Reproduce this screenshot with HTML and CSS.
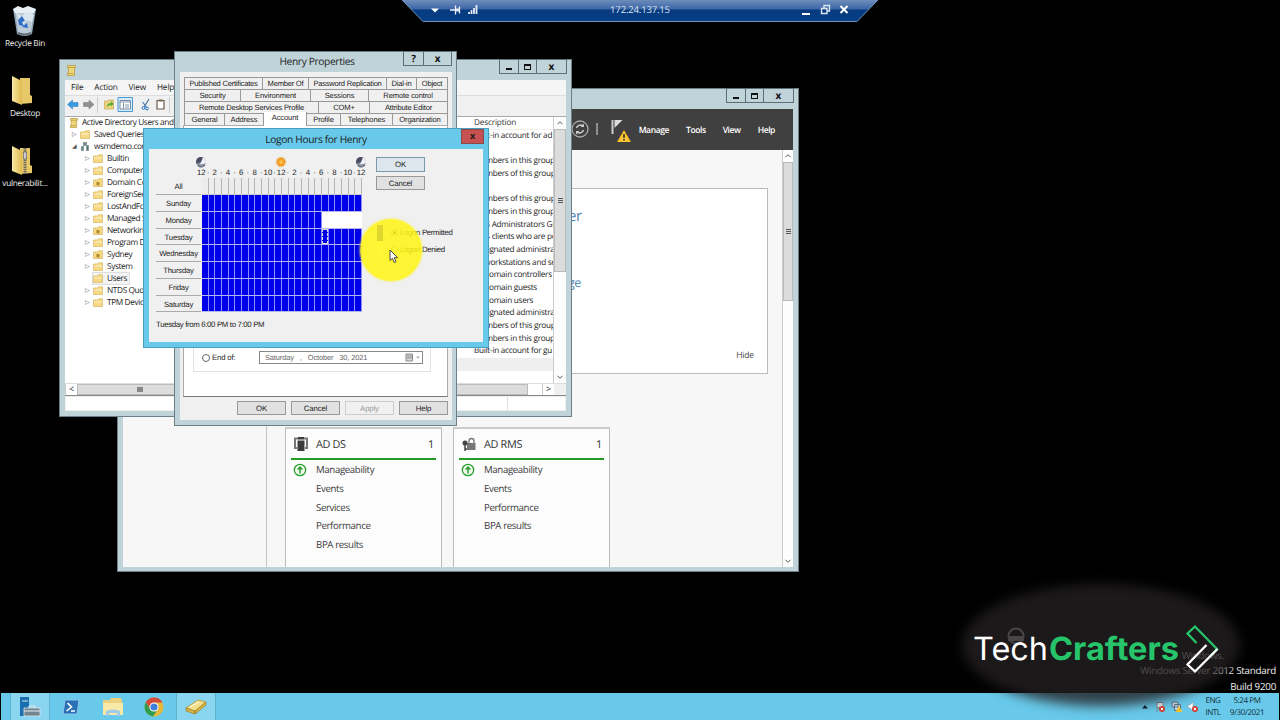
FILE: index.html
```html
<!DOCTYPE html>
<html lang="en">
<head>
<meta charset="UTF-8">
<meta name="viewport" content="width=device-width, initial-scale=1.0">
<title>172.24.137.15</title>
<link rel="stylesheet" href="styles.css">
</head>
<body>
<svg width="0" height="0" class="defs">
  <defs>
    <linearGradient id="gold" x1="0" x2="1"><stop offset="0" stop-color="#f8e9a4"/><stop offset="1" stop-color="#dfb94e"/></linearGradient>
    <radialGradient id="sun"><stop offset="0" stop-color="#ffcf5a"/><stop offset="1" stop-color="#ee8a10"/></radialGradient>
    <symbol id="folder" viewBox="0 0 10 9"><path d="M.5 2h4l1-1.2h4v7.7h-9z" fill="#f5d988" stroke="#d9b65c" stroke-width=".7"/><path d="M1 4h8" stroke="#fdf0c2"/></symbol>
    <symbol id="ou" viewBox="0 0 10 9"><path d="M.5 2h4l1-1.2h4v7.7h-9z" fill="#f5d988" stroke="#d9b65c" stroke-width=".7"/><path d="M3.5 4h3v3.5h-3z" fill="#b48a2c"/></symbol>
    <symbol id="book" viewBox="0 0 10 11"><path d="M1.500 .5h8v2h-1v8h-7V8.500h1V2.500h-1z" fill="#ecd67a" stroke="#b3943a" stroke-width=".7"/><path d="M2.500 2.500h6M1.500 8.500h6" stroke="#b79633" stroke-width=".7"/></symbol>
    <symbol id="moon" viewBox="0 0 12 12"><circle cx="6" cy="6" r="5" fill="#8a90a4"/><path d="M1.500 7.500A4.700 4.700 0 0 1 8 1.600L6.500 6z" fill="#4a4e60"/><path d="M8 1.600a4.800 4.800 0 0 1 2.500 6L5 8.500z" fill="#eef0f6"/><path d="M10 9A5 5 0 0 1 3 10" stroke="#4c5164" fill="none"/></symbol>
    <symbol id="up" viewBox="0 0 12 12"><path d="M3.500 7.200 6 4.700l2.500 2.500" fill="none" stroke="#555" stroke-width="1"/></symbol>
    <symbol id="ok" viewBox="0 0 14 14"><circle cx="7" cy="7" r="5.700" fill="#effaef" stroke="#2ba02b" stroke-width="1.300"/><path d="M7 10.500V4.200M4.600 6.500 7 4l2.400 2.500" fill="none" stroke="#2ba02b" stroke-width="1.500"/></symbol>
  </defs>
</svg>

<div class="desktop">
  <div class="shortcut recycle">
    <svg width="30" height="32" viewBox="0 0 30 32"><path d="M3 4l4 25q8 4 15 0l4-25z" fill="#8fa3b6"/><path d="M5 5l3 22q7 3 13 0l3-22z" fill="#bccbd8"/><path d="M3 4l5-3 5 2 5-2 8 3-2 4H5z" fill="#e8f0f5"/><path d="M6 8l6 3 5-5 7 4-2 7-5-2-4 5-4-5z" fill="#dce6ee"/><path d="M8 15l4-4 3 5-3 1 2 4-5-1zM12 22l5-4 1 5z" fill="#2f6fc8"/><path d="M8 28q7 3 13 0" stroke="#66717c" stroke-width="2" fill="none"/></svg>
    <span>Recycle Bin</span>
  </div>
  <div class="shortcut desk">
    <svg width="26" height="32" viewBox="0 0 26 32"><path d="M11 3h10v17l2 1v7l-12 1z" fill="#e7c869"/><path d="M3 1l10 5v24L3 26z" fill="url(#gold)"/></svg>
    <span>Desktop</span>
  </div>
  <div class="shortcut zip">
    <svg width="26" height="32" viewBox="0 0 26 32"><path d="M11 3h10v17l2 1v7l-12 1z" fill="#e7c869"/><path d="M3 1l10 5v24L3 26z" fill="url(#gold)"/><path d="M16 3v26" stroke="#6e6a60" stroke-width="3" stroke-dasharray="1.500 .8"/><path d="M14.500 7h3v7h-3z" fill="#c9cdd2" stroke="#5c5c5c" stroke-width=".6"/></svg>
    <span>vulnerabilit...</span>
  </div>

  <div class="rdp">
    <svg class="rdp-shape" width="478" height="23" viewBox="0 0 478 23">
      <defs><linearGradient id="rdpg" x2="0" y2="1"><stop offset="0" stop-color="#6d8dbc"/><stop offset=".42" stop-color="#3c66a5"/><stop offset=".46" stop-color="#063a80"/><stop offset="1" stop-color="#064084"/></linearGradient></defs>
      <path d="M1 0h476l-21 21.500H22z" fill="url(#rdpg)"/><path d="M1 0l21 21.500h434L477 0" fill="none" stroke="#7290ba"/>
      <path d="M30 8.500h8l-4 4z" fill="#fff"/>
      <path d="M54.500 5.500v9M49 10h6M58.500 6.500v7" fill="none" stroke="#eef3fa" stroke-width="1.300"/><path d="M55 8.500h3.500v3H55z" fill="#dfe8f4"/>
      <path d="M68 14v-2M70.500 14v-4M73 14V8M75.500 14V5" stroke="#e3eaf5" stroke-width="1.800"/>
      <path d="M401 14h8" stroke="#fff" stroke-width="2"/><path d="M420.500 8.500h5.500v5h-5.500zM423 8V5.500h5.500V11H426" fill="none" stroke="#dce6f3" stroke-width="1.400"/><path d="M439.500 6l7 7M446.500 6l-7 7" stroke="#fff" stroke-width="2"/>
    </svg>
    <span>172.24.137.15</span>
  </div>

  <!-- Server Manager -->
  <div class="window manager">
    <div class="titlebar"><div class="controls"><i><b class="min"></b></i><i><b class="max"></b></i><i class="wide">x</i></div></div>
    <div class="toolbar">
      <svg width="60" height="34" viewBox="0 0 60 34"><circle cx="11" cy="16" r="8" fill="none" stroke="#aaa" stroke-width="1.300"/><path d="M7.500 15a4 4 0 0 1 6.500-2M14.500 17a4 4 0 0 1-6.500 2" fill="none" stroke="#ccc" stroke-width="1.500"/><path d="M15 10.500V14h-3.500zM7 21.500V18h3.500z" fill="#ccc"/><path d="M28 10v12" stroke="#aaa" stroke-width="1.500"/><path d="M43.500 7v14" stroke="#ccc" stroke-width="2"/><path d="M45.500 7h8l-8 8z" fill="#ddd"/><path d="M55 17l7 12H48z" fill="#f7b81c"/><path d="M55 18.500l5.500 10h-11z" fill="#fcc838"/><path d="M55 21v4M55 26v1.500" stroke="#222" stroke-width="1.500"/></svg>
      <span>Manage</span><span>Tools</span><span>View</span><span>Help</span>
    </div>
    <div class="manager-body">
      <div class="side"></div>
      <div class="dash">
        <div class="welcome"><p class="big">er</p><p class="link">ge</p><span class="hide">Hide</span></div>
        <div class="tiles">
          <div class="tile">
            <h3><svg width="14" height="15" viewBox="0 0 14 15"><path d="M4 1.500H1V11h2M10 1.500h3V11h-2" fill="none" stroke="#777" stroke-width="2"/><path d="M4 0h6v2.500H4zM3.500 3.500h7V14h-7z" fill="#3c3c3c"/></svg>AD DS<em>1</em></h3>
            <ul><li class="first"><svg width="14" height="14"><use href="#ok"/></svg>Manageability</li><li>Events</li><li>Services</li><li>Performance</li><li>BPA results</li></ul>
          </div>
          <div class="tile">
            <h3><svg width="14" height="15" viewBox="0 0 14 15"><path d="M5 6h8.500v7H5z" fill="#777"/><path d="M7 6V4a2.400 2.400 0 0 1 5 0v2" fill="none" stroke="#777" stroke-width="1.300"/><circle cx="3" cy="6" r="2.500" fill="#444"/><path d="M3 6v8M3 12h2" stroke="#444" stroke-width="1.500"/></svg>AD RMS<em>1</em></h3>
            <ul><li class="first"><svg width="14" height="14"><use href="#ok"/></svg>Manageability</li><li>Events</li><li>Performance</li><li>BPA results</li></ul>
          </div>
        </div>
      </div>
      <div class="vscroll"><svg width="10" height="12" viewBox="1 0 10 12"><use href="#up" width="12" height="12"/></svg><div class="thumb"><b></b></div><svg class="down" width="10" height="12" viewBox="1 0 10 12"><use href="#up" width="12" height="12"/></svg></div>
    </div>
  </div>

  <!-- Active Directory Users and Computers -->
  <div class="window aduc">
    <div class="titlebar"><svg width="10" height="11"><use href="#book"/></svg><div class="controls"><i><b class="min"></b></i><i><b class="max"></b></i><i class="wide">x</i></div></div>
    <div class="menu"><span>File</span><span>Action</span><span>View</span><span>Help</span></div>
    <div class="tools">
      <svg width="106" height="18" viewBox="0 0 106 18"><path d="M2.500 8.500l5-4.500v2.500H13v4H7.500V13z" fill="#3a9be0" stroke="#2b7cbc" stroke-width=".5"/><path d="M29 8.500L24 4v2.500h-5.500v4H24V13z" fill="#909090" stroke="#777" stroke-width=".5"/><path d="M32.500 1v16M104.500 1v16" stroke="#ccc"/><path d="M39.500 5h3l1-1h5v9h-9z" fill="#ecd27c" stroke="#bfa04a" stroke-width=".6"/><path d="M42 11q0-4 4-4V5l2.500 3L46 10.500V9q-2 0-4 2z" fill="#56ad32"/><path d="M53 1.500h14.500v14H53z" fill="#d7ebfa" stroke="#4a9ad4"/><path d="M55 4.500h10.500v8.500H55z" fill="#fff" stroke="#778ca0"/><path d="M55 6h10M58.500 7v6M60 9h4M60 11h4" stroke="#8196aa"/><path d="M84 3l-5 8M77.500 6l4 5" stroke="#4b78a8" stroke-width="1.200"/><circle cx="78.500" cy="12" r="1.400" fill="none" stroke="#2a7cc4"/><circle cx="82" cy="12.500" r="1.400" fill="none" stroke="#2a7cc4"/><path d="M92 4.500h7V13h-7z" fill="#fff" stroke="#6b5a48" stroke-width="1.200"/><path d="M93.500 3.500h4v2h-4z" fill="#776655"/></svg>
    </div>
    <div class="panes">
      <div class="left">
        <ul class="tree">
          <li class="root"><svg width="9" height="10"><use href="#book"/></svg>Active Directory Users and</li>
          <li class="l1"><i>▷</i><svg width="10" height="9"><use href="#folder"/></svg>Saved Queries</li>
          <li class="l1"><i>◢</i><svg width="10" height="10" viewBox="0 0 10 10"><path d="M1 5h3v5H1zM6 4h3v6H6zM3 1h4v4H3z" fill="#8fa2a2"/><path d="M2 6v3M7.500 5v4M5 2v2" stroke="#50706a"/></svg>wsmdemo.com</li>
          <li><i>▷</i><svg width="10" height="9"><use href="#folder"/></svg>Builtin</li>
          <li><i>▷</i><svg width="10" height="9"><use href="#folder"/></svg>Computers</li>
          <li><i>▷</i><svg width="10" height="9"><use href="#ou"/></svg>Domain Controllers</li>
          <li><i>▷</i><svg width="10" height="9"><use href="#folder"/></svg>ForeignSecurityPrincipals</li>
          <li><i>▷</i><svg width="10" height="9"><use href="#folder"/></svg>LostAndFound</li>
          <li><i>▷</i><svg width="10" height="9"><use href="#folder"/></svg>Managed Service</li>
          <li><i>▷</i><svg width="10" height="9"><use href="#ou"/></svg>Networking</li>
          <li><i>▷</i><svg width="10" height="9"><use href="#folder"/></svg>Program Data</li>
          <li><i>▷</i><svg width="10" height="9"><use href="#ou"/></svg>Sydney</li>
          <li><i>▷</i><svg width="10" height="9"><use href="#folder"/></svg>System</li>
          <li><i></i><span class="picked"><svg width="10" height="9"><use href="#folder"/></svg>Users</span></li>
          <li><i>▷</i><svg width="10" height="9"><use href="#folder"/></svg>NTDS Quotas</li>
          <li><i>▷</i><svg width="10" height="9"><use href="#folder"/></svg>TPM Devices</li>
        </ul>
        <div class="hscroll"><span class="arrow">&lt;</span><div class="bar"><b></b></div></div>
      </div>
      <div class="right">
        <div class="list">
          <div class="rows">
            <p class="head">Description</p>
            <p>Built-in account for ad</p><p></p><p>Members in this group</p><p>Members of this group</p><p></p><p>Members of this group</p><p>Members in this group</p><p>DNS Administrators Gr</p><p>DNS clients who are pe</p><p>Designated administra</p><p>All workstations and se</p><p>All domain controllers</p><p>All domain guests</p><p>All domain users</p><p>Designated administra</p><p>Members of this group</p><p>Members in this group</p><p>Built-in account for gu</p><p class="gray"></p>
          </div>
          <div class="vscroll"><svg width="12" height="12"><use href="#up"/></svg><div class="thumb"><b></b></div><svg class="down" width="12" height="12"><use href="#up"/></svg></div>
        </div>
        <div class="hscroll"><div class="bar"></div><span class="gap"></span><span class="arrow">&gt;</span><span class="corner"></span></div>
      </div>
    </div>
    <div class="status"><span></span></div>
  </div>

  <!-- Henry Properties -->
  <div class="window props">
    <div class="titlebar"><span>Henry Properties</span><div class="controls"><i>?</i><i class="wide">x</i></div></div>
    <div class="dialog-body">
      <div class="tabs r1"><span>Published Certificates</span><span>Member Of</span><span>Password Replication</span><span>Dial-in</span><span>Object</span></div>
      <div class="tabs r2"><span>Security</span><span>Environment</span><span>Sessions</span><span>Remote control</span></div>
      <div class="tabs r3"><span>Remote Desktop Services Profile</span><span>COM+</span><span>Attribute Editor</span></div>
      <div class="tabs r4"><span>General</span><span>Address</span><span class="active">Account</span><span>Profile</span><span>Telephones</span><span>Organization</span></div>
      <div class="sheet">
        <div class="expires"><span class="radio"></span><span class="end">End of:</span>
          <div class="date"><span>Saturday</span><span>,</span><span>October</span><span>30, 2021</span>
            <svg width="16" height="10" viewBox="0 0 16 10"><path d="M1 1h6.500v7H1z" fill="#ddd" stroke="#888"/><path d="M2 3h5M2 5h5" stroke="#888"/><path d="M11 3.500h4l-2 2.200z" fill="#aaa"/></svg></div>
        </div>
      </div>
      <div class="buttons"><span class="btn">OK</span><span class="btn">Cancel</span><span class="btn off">Apply</span><span class="btn">Help</span></div>
    </div>
  </div>

  <!-- Logon hours -->
  <div class="window logon">
    <div class="titlebar"><span>Logon Hours for Henry</span><div class="close">x</div></div>
    <div class="logon-body">
      <div class="schedule">
        <div class="sky"><svg width="12" height="12"><use href="#moon"/></svg><svg width="12" height="12" viewBox="0 0 12 12"><circle cx="6" cy="6" r="4.700" fill="none" stroke="#e8a33a" stroke-width="1.200" stroke-dasharray="1 1.100"/><circle cx="6" cy="6" r="4.200" fill="url(#sun)"/></svg><svg width="12" height="12"><use href="#moon"/></svg></div>
        <div class="hours"><i>12</i><i>·</i><i>2</i><i>·</i><i>4</i><i>·</i><i>6</i><i>·</i><i>8</i><i>·</i><i>10</i><i>·</i><i>12</i><i>·</i><i>2</i><i>·</i><i>4</i><i>·</i><i>6</i><i>·</i><i>8</i><i>·</i><i>10</i><i>·</i><i>12</i></div>
        <div class="day all"><span>All</span><div class="cells"></div></div>
        <div class="day"><span>Sunday</span><div class="cells"></div></div>
        <div class="day monday"><span>Monday</span><div class="cells"><div class="denied"></div></div></div>
        <div class="day"><span>Tuesday</span><div class="cells"><div class="focus"></div></div></div>
        <div class="day"><span>Wednesday</span><div class="cells"></div></div>
        <div class="day"><span>Thursday</span><div class="cells"></div></div>
        <div class="day"><span>Friday</span><div class="cells"></div></div>
        <div class="day"><span>Saturday</span><div class="cells"></div></div>
        <p class="range">Tuesday from 6:00 PM to 7:00 PM</p>
      </div>
      <div class="actions">
        <span class="btn default">OK</span><span class="btn">Cancel</span>
        <div class="option permitted"><i class="swatch"></i><b class="dot on"></b><span>Logon Permitted</span></div>
        <div class="option"><i class="swatch white"></i><b class="dot"></b><span>Logon Denied</span></div>
      </div>
    </div>
  </div>
  <div class="highlight"></div>
  <svg class="cursor" width="10" height="15" viewBox="0 0 10 15"><path d="M1 1v10.500l2.400-2.200 1.800 4.200 1.800-.8-1.800-4H8.500z" fill="#fff" stroke="#333" stroke-width=".9"/></svg>

  <div class="build"><p class="act">Windows.</p><p>Windows Server 2012 Standard</p><p>Build 9200</p></div>

  <div class="taskbar">
    <div class="task running"><svg width="22" height="22" viewBox="0 0 22 22"><path d="M1 1h9v19H1z" fill="#1b6fae"/><path d="M3 5h6" stroke="#cde6f5"/><path d="M5 12h16v8H5z" fill="#75858f" stroke="#d6e4ec" stroke-width=".8"/><path d="M10 12v-2h6v2M5 15h16" fill="none" stroke="#e2edf2"/></svg></div>
    <div class="task"><svg width="18" height="16" viewBox="0 0 18 16"><path d="M3 1h14l-2 14H1z" fill="#2a70b4" stroke="#8fc3ea"/><path d="M5.500 4l4 4-5 4M9 12h4" fill="none" stroke="#fff" stroke-width="1.600"/></svg></div>
    <div class="task"><svg width="22" height="20" viewBox="0 0 22 20"><path d="M1 3h7l1-2h10l1 3v14H1z" fill="#ecd27e"/><path d="M1 6h20v12H1z" fill="#f8e9a9"/><path d="M4 19v-5q7-3 14 0v5h-3v-3H7v3z" fill="#9fcbe8"/></svg></div>
    <div class="task"><svg width="20" height="20" viewBox="0 0 20 20"><circle cx="10" cy="10" r="9.500" fill="#e2b93c"/><path d="M1.800 5.300A9.500 9.500 0 0 1 18.500 5.500H10L6 12z" fill="#d34836"/><path d="M1.800 5.300A9.500 9.500 0 0 0 9 19.500l4.500-7L10 14.500 6 12z" fill="#2f9c50"/><circle cx="10" cy="10" r="4.600" fill="#fff"/><circle cx="10" cy="10" r="3.600" fill="#3f7fdc"/></svg></div>
    <div class="task running"><svg width="24" height="16" viewBox="0 0 24 16"><path d="M2 9L14 1l8 2-11 9z" fill="#f2e08a" stroke="#b4932c" stroke-width=".8"/><path d="M2 9l9 3v3L2 12zM11 12l11-9v3l-11 9z" fill="#d9b644" stroke="#927422" stroke-width=".6"/><path d="M6 8l9-5" stroke="#fff"/></svg></div>
    <div class="tray">
      <svg width="64" height="14" viewBox="0 0 64 14"><path d="M2 8.500h6L5 5z" fill="#123"/><path d="M17 2v10M17 2.500h6v5h-6" fill="#edf3f7" stroke="#7c8b95"/><circle cx="22" cy="9" r="3" fill="#d23b2d"/><path d="M20.800 7.800l2.400 2.400M23.200 7.800l-2.400 2.400" stroke="#fff"/><path d="M32 2h6v5h-6zM34.500 4.500h6v6h-6z" fill="#c6d9e6" stroke="#5b7182"/><path d="M39 6l3.500 6h-7z" fill="#f2c02c"/><path d="M48 5h2l3-3v9l-3-3h-2z" fill="#fff" stroke="#8a98a3" stroke-width=".6"/><circle cx="55" cy="9" r="3" fill="#d23b2d"/><path d="M53.800 7.800l2.400 2.400M56.200 7.800l-2.400 2.400" stroke="#fff"/></svg>
      <div class="lang">ENG<br>INTL</div><div class="clock">5:24 PM<br>9/30/2021</div>
    </div>
  </div>

  <div class="brand">
    <div class="haze"></div>
    <svg width="300" height="140" viewBox="0 0 300 140">
      <g opacity=".3" fill="none" stroke="#aaa" stroke-width="2"><circle cx="66" cy="56" r="7.500"/><path d="M59 57h14v3H59z" fill="#aaa"/></g>
      <text x="23" y="79.500" class="tech" textLength="75" lengthAdjust="spacingAndGlyphs">Tech</text>
      <text x="99" y="79.500" class="crafters" textLength="130" lengthAdjust="spacingAndGlyphs">Crafters</text>
      <path d="M246.500 63l-9-9.500 7.500-7L267 69l-5 5.500" fill="none" stroke="#27c56b" stroke-width="2.300"/>
      <path d="M256.500 65L237.500 84.500l7.500 7L267.500 69" fill="none" stroke="#fff" stroke-width="2.300"/>
    </svg>
  </div>
</div>
</body>
</html>
```
FILE: styles.css
```css
:root {
  --frame: #c0d3d9;
  --face: #f0f0f0;
  --blue: #68c9ea;
  --ui: "Open Sans", "Noto Sans", sans-serif;
  --dlg: "Liberation Sans", Arial, sans-serif;
}

* {
  box-sizing: border-box;
}

body {
  margin: 0;
  background: #000;
  font-family: var(--ui);
  font-size: 8px;
  color: #1c1c1c;
  text-rendering: geometricPrecision;
}

p, ul, h3 {
  margin: 0;
  padding: 0;
  list-style: none;
  font-weight: normal;
}

i, em {
  font-style: normal;
}

svg {
  flex: none;
}

.defs {
  position: absolute;
}

.desktop {
  position: relative;
  width: 1280px;
  height: 720px;
  overflow: hidden;
  white-space: nowrap;
}

/* desktop icons */
.shortcut {
  position: absolute;
  left: 0;
  width: 50px;
  display: flex;
  flex-direction: column;
  align-items: center;
  color: #eee;
  font-size: 8.3px;
  line-height: 12px;
  letter-spacing: -0.3px;
}

.recycle { top: 5px; }
.desk { top: 75px; }
.zip { top: 145px; }
.shortcut svg { margin-bottom: 1px; }
.desk svg, .zip svg { margin-right: 6px; }

/* remote desktop bar */
.rdp {
  position: absolute;
  left: 401px;
  top: 0;
  width: 478px;
  height: 22px;
  text-align: center;
  color: #d6e2f2;
  font-size: 9.6px;
  line-height: 20px;
  letter-spacing: -0.2px;
}

.rdp-shape {
  position: absolute;
  left: 0;
  top: 0;
}

.rdp span {
  position: relative;
}

/* windows */
.window {
  position: absolute;
  display: flex;
  flex-direction: column;
  background: var(--frame);
  border: 1px solid #6d7f86;
}

.titlebar {
  flex: none;
  display: flex;
  justify-content: center;
  position: relative;
  height: 20px;
}

.controls {
  position: absolute;
  right: 0;
  top: -1px;
  display: flex;
  height: 15px;
  border: 1px solid #5d6e76;
}

.controls i {
  width: 18px;
  display: flex;
  align-items: center;
  justify-content: center;
  padding-bottom: 2px;
  font: bold 10px/12px var(--ui);
  color: #111;
}

.controls i + i { border-left: 1px solid #5d6e76; }
.controls .wide { width: 30px; }

.min {
  width: 6px;
  height: 2px;
  margin-top: 6px;
  background: #111;
}

.max {
  width: 7px;
  height: 6px;
  margin-top: 2px;
  border: 1px solid #111;
  border-top-width: 2px;
}

.vscroll {
  flex: none;
  display: flex;
  flex-direction: column;
  background: #fdfdfd;
  border-left: 1px solid #ccc;
}

.thumb {
  display: flex;
  align-items: center;
  justify-content: center;
  background: #dcdcdc;
  border: 1px solid #bbb;
}

.thumb b {
  width: 5px;
  height: 5px;
  background: repeating-linear-gradient(#555 0 1px, transparent 1px 2px);
}

.down {
  margin-top: auto;
  transform: rotate(180deg);
}

/* server manager */
.manager {
  left: 117px;
  top: 88px;
  width: 682px;
  height: 484px;
  padding: 0 5px 4px;
}

.manager .controls { right: -1px; }

.manager .toolbar {
  flex: none;
  height: 41px;
  background: #404040;
  color: #fff;
  display: flex;
  align-items: center;
  justify-content: flex-end;
  padding-right: 18px;
  font-size: 8.6px;
  font-weight: 600;
  letter-spacing: -0.45px;
}

.toolbar svg { margin: 0 10px 0 0; overflow: visible; }
.toolbar span + span { margin-left: 17px; }

.manager-body {
  flex: 1;
  display: flex;
  background: #f7f7f7;
  min-height: 0;
}

.side {
  width: 144px;
  border-right: 1px solid #c4c4c4;
}

.dash {
  flex: 1;
  padding: 38px 14px 0 18px;
}

.welcome {
  height: 186px;
  background: #fff;
  border: 1px solid #bbb;
  padding: 16px 13px 0 282px;
  color: #4d86b5;
  font-weight: 300;
}

.big { font-size: 15px; line-height: 22px; letter-spacing: -0.5px; }
.link { font-size: 12.5px; line-height: 18px; margin-top: 47px; letter-spacing: -0.5px; }

.hide {
  display: block;
  margin-top: 57px;
  text-align: right;
  font-size: 8.6px;
  line-height: 12px;
  letter-spacing: -0.2px;
  font-weight: 400;
  color: #444;
}

.tiles {
  display: flex;
  gap: 11px;
  margin-top: 53px;
}

.tile {
  width: 157px;
  height: 140px;
  background: #fcfcfc;
  border: 1px solid #bbb;
  border-top: 2px solid #ccc;
  border-bottom: 0;
  padding: 0 5px;
}

.tile h3 {
  height: 31px;
  display: flex;
  align-items: center;
  gap: 8px;
  padding: 2px 2px 0 3px;
  font-size: 10.9px;
  letter-spacing: -0.35px;
  border-bottom: 2px solid #259a25;
  color: #333;
}

.tile h3 em { margin-left: auto; }

.tile li {
  display: flex;
  height: 18.7px;
  align-items: center;
  padding-left: 25px;
  font-size: 9.7px;
  letter-spacing: -0.38px;
  color: #3c3c3c;
}

.tile .first { padding-left: 2px; gap: 9px; margin-top: 0.5px; }

.manager .vscroll { width: 11px; }
.manager .thumb { height: 139px; }

/* users and computers */
.aduc {
  left: 59px;
  top: 59px;
  width: 513px;
  height: 358px;
  padding: 0 5px 5px;
}

.aduc .titlebar svg { margin: 5px auto 0 1px; }
.aduc .controls { right: -1px; }

.menu {
  flex: none;
  height: 16px;
  background: #f5f5f5;
  border-bottom: 1px solid #ddd;
  display: flex;
  gap: 10.8px;
  padding: 1px 0 0 6px;
  font-size: 8.3px;
  line-height: 14px;
  letter-spacing: -0.15px;
}

.tools {
  flex: none;
  height: 20px;
  background: #f0f0f0;
}

.panes {
  flex: 1;
  display: flex;
  min-height: 0;
  background: #fff;
  border-bottom: 1px solid #888;
}

.left { width: 380px; }
.left, .right { display: flex; flex-direction: column; }
.right { flex: 1; background: #fff; min-width: 0; }

.tree {
  flex: 1;
  border-top: 1px solid #aaa;
}

.tree li {
  display: flex;
  align-items: center;
  height: 12px;
  padding-left: 20px;
  font-size: 8.3px;
  letter-spacing: -0.4px;
}

.tree .root { height: 11px; }
.tree li svg { margin-right: 4px; }
.tree .root { padding-left: 4px; }
.tree .l1 { padding-left: 7px; }

.tree i {
  width: 8px;
  font: 6px "DejaVu Sans", sans-serif;
  color: #555;
}

.picked {
  display: flex;
  align-items: center;
  height: 11px;
  background: #f4f4f4;
  box-shadow: 0 0 0 1px #ddd;
  padding-right: 2px;
}

.hscroll {
  flex: none;
  height: 12px;
  display: flex;
  background: #fff;
  border-top: 1px solid #ddd;
}

.arrow {
  width: 12px;
  text-align: center;
  line-height: 10px;
  font-size: 9px;
  border-left: 1px solid #ccc;
}

.hscroll .bar {
  flex: 1;
  background: #dcdcdc;
  border: 1px solid #bbb;
}

.left .bar b {
  display: block;
  width: 6px;
  height: 5px;
  margin: 2px 0 0 59px;
  background: #888;
}

.right .bar { flex: none; width: 83px; }
.right .gap { width: 14px; }
.right .corner { flex: 1; background: #f0f0f0; }

.list {
  flex: 1;
  display: flex;
  min-height: 0;
  border-top: 1px solid #aaa;
}

.rows {
  flex: 1;
  overflow: hidden;
}

.rows p {
  height: 12.68px;
  padding-left: 29px;
  line-height: 12.68px;
  font-size: 8.2px;
  letter-spacing: -0.27px;
}

.rows .head {
  height: 12.8px;
  border-bottom: 1px solid #eee;
  letter-spacing: -0.15px;
  color: #333;
}

.rows .gray { background: #efefef; }
.list .vscroll { width: 13px; }
.list .thumb { height: 143px; }

.status {
  flex: none;
  height: 15px;
  background: #fff;
  border: 1px solid #eee;
}

.status span {
  display: block;
  width: 442px;
  height: 13px;
  border-right: 1px solid #ddd;
}

/* properties dialog */
.props {
  left: 174px;
  top: 51px;
  width: 283px;
  height: 375px;
  padding: 0 4px 5px 5px;
  font-family: var(--dlg);
}

.props .titlebar, .logon .titlebar {
  padding-left: 2px;
  font: 10.2px/19px var(--ui);
  letter-spacing: -0.35px;
}

.props .controls { right: 0; }
.props .controls i { width: 19px; }
.props .controls .wide { width: 28px; }

.dialog-body {
  flex: 1;
  display: flex;
  flex-direction: column;
  background: var(--face);
  padding: 5px 4px 5px 3px;
}

.tabs {
  display: grid;
  height: 12px;
  margin-left: 1px;
  border-top: 1px solid #999;
  border-left: 1px solid #999;
  font-size: 7.6px;
  line-height: 12px;
  letter-spacing: -0.15px;
  text-align: center;
}

.tabs span { border-right: 1px solid #999; }
.r1 { grid-template-columns: 78px 46px 78px 30px 1fr; letter-spacing: -0.24px; }
.r2 { grid-template-columns: 56px 70px 58px 1fr; }
.r3 { grid-template-columns: 134px 51px 1fr; letter-spacing: -0.2px; }
.r4 { grid-template-columns: 40px 39px 43px 34px 52px 1fr; }

.active {
  height: 14px;
  margin-top: -2px;
  background: #fff;
  position: relative;
}

.sheet {
  flex: 1;
  background: #fff;
  border: 1px solid #aaa;
  border-bottom-color: #777;
  display: flex;
  flex-direction: column;
  justify-content: flex-end;
  padding: 0 16px 24px 9px;
}

.expires {
  height: 220px;
  border: 1px solid #e2e2e2;
  display: flex;
  align-items: flex-end;
  padding: 0 7px 7px 8px;
  font-size: 7.8px;
  letter-spacing: -0.2px;
}

.radio {
  width: 8px;
  height: 8px;
  margin-bottom: 2px;
  border: 1px solid #666;
  border-radius: 50%;
}

.end { margin-left: 2px; line-height: 12px; }

.date {
  flex: none;
  width: 164px;
  height: 13px;
  margin-left: auto;
  border: 1px solid #888;
  display: flex;
  align-items: center;
  padding: 0 1px 0 5px;
  gap: 6px;
  font-size: 7.4px;
  letter-spacing: -0.1px;
  color: #666;
}

.date svg { margin-left: auto; }

.buttons {
  display: flex;
  justify-content: flex-end;
  gap: 5px;
  margin-top: 4px;
}

.btn {
  width: 49px;
  height: 14px;
  background: #e1e1e1;
  border: 1px solid #999;
  text-align: center;
  font: 7.8px/13px var(--dlg);
  letter-spacing: -0.15px;
}

.off {
  color: #999;
  background: #f1f1f1;
  border-color: #ccc;
}

/* logon hours dialog */
.logon {
  left: 143px;
  top: 128px;
  width: 346px;
  height: 220px;
  padding: 0 5px 5px;
  background: var(--blue);
  border-color: #4b9fbe;
  font-family: var(--dlg);
}

.logon .titlebar { line-height: 21px; padding-left: 0; }

.close {
  position: absolute;
  right: -1px;
  top: 0;
  width: 23px;
  height: 15px;
  background: #c75050;
  border: 1px solid #8a4a4a;
  text-align: center;
  font: bold 9px/11px var(--ui);
}

.logon-body {
  flex: 1;
  display: flex;
  background: var(--face);
  padding-left: 7px;
}

.schedule { width: 207px; }

.sky {
  display: flex;
  justify-content: space-between;
  padding: 7px 0 0 39px;
  width: 211px;
  height: 19px;
}

.hours {
  display: grid;
  grid-template-columns: repeat(25, 6.67px);
  margin-left: 42px;
  height: 10px;
  font-size: 7.8px;
  line-height: 10px;
}

.hours i {
  display: flex;
  justify-content: center;
}

.day {
  display: flex;
  height: 16.75px;
}

.day span {
  width: 45px;
  margin-right: 1px;
  border-bottom: 1px solid #aaa;
  text-align: center;
  font-size: 7.7px;
  line-height: 17px;
  letter-spacing: -0.2px;
}

.cells {
  position: relative;
  width: 160px;
  border-bottom: 1px solid #b4b4f4;
  background: repeating-linear-gradient(90deg, #0000e8 0 5.67px, #8c8cf6 5.67px 6.67px);
}

.all { height: 17px; }
.all .cells {
  background: repeating-linear-gradient(90deg, #ececec 0 5.67px, #b5b5b5 5.67px 6.67px);
  border-color: #ccc;
}

.denied {
  width: 40px;
  height: 16px;
  margin-left: auto;
  background: #fff;
}

.focus {
  width: 6px;
  height: 15px;
  margin-left: 120px;
  border: 1px dashed #ddd;
}

.range {
  margin-top: 7px;
  font-size: 7.8px;
  line-height: 11px;
  letter-spacing: -0.33px;
}

.actions {
  padding: 8px 0 0 13px;
  display: flex;
  flex-direction: column;
}

.actions .btn + .btn { margin-top: 4px; }

.actions .default {
  height: 15px;
  background: #dce6ec;
  border-color: #7a9aac;
}

.option {
  display: flex;
  align-items: center;
  height: 17px;
  font-size: 7.8px;
  letter-spacing: -0.32px;
}

.permitted { margin-top: 34px; }

.swatch {
  width: 6px;
  height: 16px;
  margin: 0 8px 0 1px;
  background: #2222cc;
}

.white { background: #fff; }

.dot {
  width: 7px;
  height: 7px;
  margin-right: 2px;
  border: 1px solid #888;
  border-radius: 50%;
}

.on { background: radial-gradient(#222 35%, #fff 45%); }

.highlight {
  position: absolute;
  left: 360px;
  top: 219px;
  width: 62px;
  height: 62px;
  border-radius: 50%;
  background: rgba(255, 246, 20, 0.86);
  box-shadow: 0 0 2px 1px rgba(255, 246, 60, 0.5);
}

.cursor {
  position: absolute;
  left: 389px;
  top: 249px;
}

/* watermark */
.build {
  position: absolute;
  right: 4px;
  bottom: 26px;
  color: #eee;
  text-align: right;
  font-size: 9.8px;
  line-height: 15.5px;
  letter-spacing: -0.25px;
}

.act { padding-right: 52px; }

/* taskbar */
.taskbar {
  position: absolute;
  left: 1px;
  right: 1px;
  bottom: 0;
  height: 27px;
  padding-left: 9px;
  background: var(--blue);
  display: flex;
  gap: 2px;
}

.task {
  width: 39.5px;
  display: flex;
  align-items: center;
  justify-content: center;
}

.running {
  background: #8ad5ef;
  border: 1px solid #5ab2d0;
  border-width: 0 1px;
}

.tray {
  margin-left: auto;
  display: flex;
  align-items: center;
  padding-right: 14px;
  font-size: 8px;
  line-height: 11.5px;
  letter-spacing: -0.4px;
  color: #123038;
}

.tray svg { margin-right: 1px; }
.lang { width: 16px; text-align: center; }
.clock { width: 36px; margin-left: 8px; text-align: center; }

/* channel logo */
.brand {
  position: absolute;
  left: 950px;
  top: 580px;
  width: 300px;
  height: 140px;
}

.haze {
  position: absolute;
  left: 12px;
  top: 4px;
  width: 278px;
  height: 122px;
  border-radius: 50%;
  background: rgba(35, 31, 32, 0.8);
  filter: blur(6px);
}

.brand svg { position: relative; }
.tech { font: 400 32px Inter, sans-serif; fill: #fff; }
.crafters { font: 700 32px Inter, sans-serif; fill: #27c56b; }
```
